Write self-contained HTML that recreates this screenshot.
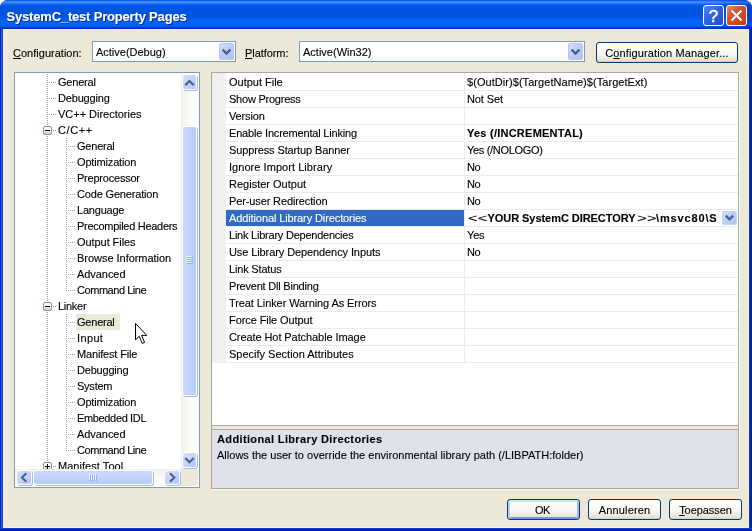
<!DOCTYPE html><html><head><meta charset="utf-8"><title>SystemC_test Property Pages</title><style>
html,body{margin:0;padding:0;background:#fff;}
body{width:752px;height:531px;overflow:hidden;position:relative;font-family:"Liberation Sans",sans-serif;font-size:11px;color:#000;}
*{box-sizing:border-box;}
.abs{position:absolute;}
#win{position:absolute;left:0;top:0;width:752px;height:531px;background:#0a3bd6;border-radius:8px 8px 0 0;overflow:hidden;}
#title{position:absolute;left:0;top:0;width:752px;height:29px;
 background:linear-gradient(to bottom,#0042d8 0,#2a7cf8 1px,#3a8eff 2.5px,#0a62ee 4.5px,#0055e0 6.5px,#0055e0 16px,#0058e6 18px,#0066fa 21px,#0066fa 25px,#0050e0 27px,#0030c0 28.5px,#0030c0 29px);}
#title .sh{position:absolute;right:0;top:0;width:40px;height:29px;background:linear-gradient(to right,rgba(0,20,160,0) 0,rgba(0,20,160,0.35) 100%);}
#title .t{position:absolute;left:6.5px;top:9px;font-family:"Liberation Sans",sans-serif;color:#fff;text-shadow:1px 1px 0 #0a2a8c;white-space:nowrap;line-height:15px;}
#client{position:absolute;left:3px;top:29px;width:746px;height:499px;background:#ece9d8;box-shadow:inset 0 0 0 1px #f7f2dc;}
#bl{position:absolute;left:0;top:29px;width:3px;height:502px;background:linear-gradient(to right,#0023c7 0,#0023c7 1px,#155cef 1px,#155cef 2px,#0b46dc 2px);}
#br{position:absolute;left:749px;top:29px;width:3px;height:502px;background:linear-gradient(to right,#0a40e0 0,#0a40e0 1px,#0026b4 1px,#0026b4 2px,#001a9c 2px);}
#bb{position:absolute;left:0;top:528px;width:752px;height:3px;background:linear-gradient(to bottom,#0a40e0 0,#0a40e0 1px,#0026b4 1px,#0026b4 2px,#001a9c 2px);}
.tb{position:absolute;top:5px;width:21px;height:21px;border:1px solid #fff;border-radius:3px;}
#help{left:703px;background:linear-gradient(135deg,#4f86f0 0,#2c63de 45%,#1f4fc8 100%);}
#close{left:726px;background:linear-gradient(135deg,#e98a6a 0,#d9502b 40%,#c63a14 100%);}
.combo{position:absolute;height:21px;background:#fff;border:1px solid #7f9db9;}
.combo .tx{position:absolute;left:3px;top:4px;white-space:nowrap;}
.dd{position:absolute;width:15px;height:17px;top:1px;right:1px;border-radius:2px;background:linear-gradient(135deg,#d2defc 0,#bccdf8 50%,#afc1f2 100%);border:1px solid #b4c6f5;}
.btn{position:absolute;height:21px;border:1px solid #003c74;border-radius:3px;background:linear-gradient(to bottom,#ffffff 0,#f7f6f0 60%,#e6e3d6 90%,#d6d0c5 100%);text-align:center;line-height:21px;white-space:nowrap;}
u{text-decoration:underline;}
.g{will-change:opacity;-webkit-text-stroke:0.12px currentColor;}
#tree{position:absolute;left:14px;top:72px;width:186px;height:416px;background:#fff;border:1px solid #7f9db9;overflow:hidden;}
.ti{position:absolute;height:16px;line-height:15px;white-space:nowrap;}
#grid{position:absolute;left:211px;top:72px;width:528px;height:417px;background:#ece9d8;border:1px solid #aca899;overflow:hidden;box-shadow:1px 1px 0 #fbfaf4;}
.gr{position:absolute;left:14px;width:512px;height:17px;border-bottom:1px solid #ebebeb;}
.gr .n{position:absolute;left:3px;top:1px;white-space:nowrap;line-height:14px;}
.gr .v{position:absolute;left:241px;top:1px;white-space:nowrap;line-height:14px;}
</style></head><body>
<div id="win">
<div id="title"><div class="sh"></div><div class="t"><span class="g" style="letter-spacing:-0.185px;font-weight:bold;font-size:13px;">SystemC_test Property Pages</span></div>
<div class="tb" id="help"><svg width="19" height="19" viewBox="0 0 19 19" style="position:absolute;left:0;top:0;will-change:opacity"><text x="9.5" y="15.8" text-anchor="middle" font-family="Liberation Sans,sans-serif" font-size="17" fill="#fff" stroke="#fff" stroke-width="0.5">?</text></svg></div>
<div class="tb" id="close"><svg width="19" height="19" viewBox="0 0 19 19" style="position:absolute;left:0;top:0"><path d="M4.5 4.5 L14.5 14.5 M14.5 4.5 L4.5 14.5" stroke="#fff" stroke-width="2.2" stroke-linecap="butt" fill="none"/></svg></div>
</div>
<div id="bl"></div><div id="br"></div><div id="bb"></div><div id="client"></div>
</div>
<div class="abs" style="left:13px;top:47px;white-space:nowrap"><span class="g" style="letter-spacing:0.014px;"><u>C</u>onfiguration:</span></div>
<div class="combo" style="left:92px;top:41px;width:144px"><div class="tx"><span class="g" style="letter-spacing:-0.008px;">Active(Debug)</span></div><div class="dd"><svg width="13" height="15" viewBox="0 0 13 15" style="position:absolute;left:0;top:0"><path d="M2.6 5.7 L6.5 9.6 L10.4 5.7" stroke="#4d6185" stroke-width="2.4" fill="none"/></svg></div></div>
<div class="abs" style="left:245px;top:47px;white-space:nowrap"><span class="g" style="letter-spacing:-0.068px;"><u>P</u>latform:</span></div>
<div class="combo" style="left:299px;top:41px;width:286px"><div class="tx"><span class="g" style="letter-spacing:0.002px;">Active(Win32)</span></div><div class="dd"><svg width="13" height="15" viewBox="0 0 13 15" style="position:absolute;left:0;top:0"><path d="M2.6 5.7 L6.5 9.6 L10.4 5.7" stroke="#4d6185" stroke-width="2.4" fill="none"/></svg></div></div>
<div class="btn" style="left:596px;top:42px;width:142px"><span class="g" style="letter-spacing:0.126px;">C<u>o</u>nfiguration Manager...</span></div>
<div id="tree">
<svg width="184" height="414" style="position:absolute;left:0;top:0" shape-rendering="crispEdges"><line x1="32.5" y1="1" x2="32.5" y2="397" stroke="#aaa593" stroke-width="1" stroke-dasharray="1,1"/><line x1="34" y1="9.5" x2="42" y2="9.5" stroke="#aaa593" stroke-width="1" stroke-dasharray="1,1"/><line x1="34" y1="25.5" x2="42" y2="25.5" stroke="#aaa593" stroke-width="1" stroke-dasharray="1,1"/><line x1="34" y1="41.5" x2="42" y2="41.5" stroke="#aaa593" stroke-width="1" stroke-dasharray="1,1"/><line x1="38" y1="57.5" x2="42" y2="57.5" stroke="#aaa593" stroke-width="1" stroke-dasharray="1,1"/><line x1="53" y1="73.5" x2="61" y2="73.5" stroke="#aaa593" stroke-width="1" stroke-dasharray="1,1"/><line x1="53" y1="89.5" x2="61" y2="89.5" stroke="#aaa593" stroke-width="1" stroke-dasharray="1,1"/><line x1="53" y1="105.5" x2="61" y2="105.5" stroke="#aaa593" stroke-width="1" stroke-dasharray="1,1"/><line x1="53" y1="121.5" x2="61" y2="121.5" stroke="#aaa593" stroke-width="1" stroke-dasharray="1,1"/><line x1="53" y1="137.5" x2="61" y2="137.5" stroke="#aaa593" stroke-width="1" stroke-dasharray="1,1"/><line x1="53" y1="153.5" x2="61" y2="153.5" stroke="#aaa593" stroke-width="1" stroke-dasharray="1,1"/><line x1="53" y1="169.5" x2="61" y2="169.5" stroke="#aaa593" stroke-width="1" stroke-dasharray="1,1"/><line x1="53" y1="185.5" x2="61" y2="185.5" stroke="#aaa593" stroke-width="1" stroke-dasharray="1,1"/><line x1="53" y1="201.5" x2="61" y2="201.5" stroke="#aaa593" stroke-width="1" stroke-dasharray="1,1"/><line x1="53" y1="217.5" x2="61" y2="217.5" stroke="#aaa593" stroke-width="1" stroke-dasharray="1,1"/><line x1="38" y1="233.5" x2="42" y2="233.5" stroke="#aaa593" stroke-width="1" stroke-dasharray="1,1"/><line x1="53" y1="249.5" x2="61" y2="249.5" stroke="#aaa593" stroke-width="1" stroke-dasharray="1,1"/><line x1="53" y1="265.5" x2="61" y2="265.5" stroke="#aaa593" stroke-width="1" stroke-dasharray="1,1"/><line x1="53" y1="281.5" x2="61" y2="281.5" stroke="#aaa593" stroke-width="1" stroke-dasharray="1,1"/><line x1="53" y1="297.5" x2="61" y2="297.5" stroke="#aaa593" stroke-width="1" stroke-dasharray="1,1"/><line x1="53" y1="313.5" x2="61" y2="313.5" stroke="#aaa593" stroke-width="1" stroke-dasharray="1,1"/><line x1="53" y1="329.5" x2="61" y2="329.5" stroke="#aaa593" stroke-width="1" stroke-dasharray="1,1"/><line x1="53" y1="345.5" x2="61" y2="345.5" stroke="#aaa593" stroke-width="1" stroke-dasharray="1,1"/><line x1="53" y1="361.5" x2="61" y2="361.5" stroke="#aaa593" stroke-width="1" stroke-dasharray="1,1"/><line x1="53" y1="377.5" x2="61" y2="377.5" stroke="#aaa593" stroke-width="1" stroke-dasharray="1,1"/><line x1="38" y1="393.5" x2="42" y2="393.5" stroke="#aaa593" stroke-width="1" stroke-dasharray="1,1"/><line x1="51.5" y1="65" x2="51.5" y2="218" stroke="#aaa593" stroke-width="1" stroke-dasharray="1,1"/><line x1="51.5" y1="241" x2="51.5" y2="378" stroke="#aaa593" stroke-width="1" stroke-dasharray="1,1"/></svg>
<div class="ti" style="left:43px;top:2px"><span class="g" style="letter-spacing:-0.206px;">General</span></div>
<div class="ti" style="left:43px;top:18px"><span class="g" style="letter-spacing:-0.180px;">Debugging</span></div>
<div class="ti" style="left:43px;top:34px"><span class="g" style="letter-spacing:-0.017px;">VC++ Directories</span></div>
<div class="abs" style="left:28px;top:53px;width:9px;height:9px;border:1px solid #7898b5;border-radius:2px;background:linear-gradient(to bottom,#fff 0,#fcfbf8 35%,#d3cdb9 100%)"><div class="abs" style="left:1px;top:3px;width:5px;height:1px;background:#000"></div></div>
<div class="ti" style="left:43px;top:50px"><span class="g" style="letter-spacing:0.581px;">C/C++</span></div>
<div class="ti" style="left:62px;top:66px"><span class="g" style="letter-spacing:-0.220px;">General</span></div>
<div class="ti" style="left:62px;top:82px"><span class="g" style="letter-spacing:-0.162px;">Optimization</span></div>
<div class="ti" style="left:62px;top:98px"><span class="g" style="letter-spacing:-0.218px;">Preprocessor</span></div>
<div class="ti" style="left:62px;top:114px"><span class="g" style="letter-spacing:-0.172px;">Code Generation</span></div>
<div class="ti" style="left:62px;top:130px"><span class="g" style="letter-spacing:-0.207px;">Language</span></div>
<div class="ti" style="left:62px;top:146px"><span class="g" style="letter-spacing:-0.288px;">Precompiled Headers</span></div>
<div class="ti" style="left:62px;top:162px"><span class="g" style="letter-spacing:-0.068px;">Output Files</span></div>
<div class="ti" style="left:62px;top:178px"><span class="g" style="letter-spacing:-0.031px;">Browse Information</span></div>
<div class="ti" style="left:62px;top:194px"><span class="g" style="letter-spacing:-0.055px;">Advanced</span></div>
<div class="ti" style="left:62px;top:210px"><span class="g" style="letter-spacing:-0.449px;">Command Line</span></div>
<div class="abs" style="left:28px;top:229px;width:9px;height:9px;border:1px solid #7898b5;border-radius:2px;background:linear-gradient(to bottom,#fff 0,#fcfbf8 35%,#d3cdb9 100%)"><div class="abs" style="left:1px;top:3px;width:5px;height:1px;background:#000"></div></div>
<div class="ti" style="left:43px;top:226px"><span class="g" style="letter-spacing:-0.278px;">Linker</span></div>
<div class="abs" style="left:61px;top:241px;width:44px;height:16px;background:#ece9d8"></div>
<div class="ti" style="left:62px;top:242px"><span class="g" style="letter-spacing:-0.220px;">General</span></div>
<div class="ti" style="left:62px;top:258px"><span class="g" style="letter-spacing:0.366px;">Input</span></div>
<div class="ti" style="left:62px;top:274px"><span class="g" style="letter-spacing:-0.166px;">Manifest File</span></div>
<div class="ti" style="left:62px;top:290px"><span class="g" style="letter-spacing:-0.202px;">Debugging</span></div>
<div class="ti" style="left:62px;top:306px"><span class="g" style="letter-spacing:-0.231px;">System</span></div>
<div class="ti" style="left:62px;top:322px"><span class="g" style="letter-spacing:-0.162px;">Optimization</span></div>
<div class="ti" style="left:62px;top:338px"><span class="g" style="letter-spacing:-0.349px;">Embedded IDL</span></div>
<div class="ti" style="left:62px;top:354px"><span class="g" style="letter-spacing:-0.055px;">Advanced</span></div>
<div class="ti" style="left:62px;top:370px"><span class="g" style="letter-spacing:-0.449px;">Command Line</span></div>
<div class="abs" style="left:28px;top:389px;width:9px;height:9px;border:1px solid #7898b5;border-radius:2px;background:linear-gradient(to bottom,#fff 0,#fcfbf8 35%,#d3cdb9 100%)"><div class="abs" style="left:1px;top:3px;width:5px;height:1px;background:#000"></div><div class="abs" style="left:3px;top:1px;width:1px;height:5px;background:#000"></div></div>
<div class="ti" style="left:43px;top:386px"><span class="g" style="letter-spacing:0.045px;">Manifest Tool</span></div>
<div class="abs" style="left:166px;top:1px;width:17px;height:395px;background:linear-gradient(to right,#efeee6 0,#f8f7f2 30%,#fdfdfb 60%,#fefefc 100%)"></div>
<div class="abs" style="left:167px;top:1px;width:15px;height:16px;border:1px solid #fff;border-radius:3px;background:linear-gradient(135deg,#d6e1fe 0,#c3d3fc 50%,#b3c6f6 100%);box-shadow:1px 1px 0 #a9bcdf;"><svg width="15" height="16" viewBox="0 0 15 16" style="position:absolute;left:-1px;top:-1px"><path d="M3.2 11.3 L7.5 7 L11.8 11.3" stroke="#4d6185" stroke-width="2.1" fill="none"/></svg></div>
<div class="abs" style="left:167px;top:53px;width:15px;height:270px;border:1px solid #fff;border-radius:3px;background:linear-gradient(to right,#cbd9fe 0,#c3d3fd 50%,#b7c9f8 100%);box-shadow:1px 1px 0 #a9bcdf;"><div class="abs" style="left:3px;top:129px;width:6px;height:8px;background:repeating-linear-gradient(to bottom,#eef4fe 0,#eef4fe 1px,rgba(0,0,0,0) 1px,rgba(0,0,0,0) 2px)"></div><div class="abs" style="left:4px;top:130px;width:6px;height:8px;background:repeating-linear-gradient(to bottom,#8cb0f8 0,#8cb0f8 1px,rgba(0,0,0,0) 1px,rgba(0,0,0,0) 2px)"></div></div>
<div class="abs" style="left:167px;top:379px;width:15px;height:16px;border:1px solid #fff;border-radius:3px;background:linear-gradient(135deg,#d6e1fe 0,#c3d3fc 50%,#b3c6f6 100%);box-shadow:1px 1px 0 #a9bcdf;"><svg width="15" height="16" viewBox="0 0 15 16" style="position:absolute;left:-1px;top:-1px"><path d="M3.2 6 L7.5 10.3 L11.8 6" stroke="#4d6185" stroke-width="2.1" fill="none"/></svg></div>
<div class="abs" style="left:0;top:396px;width:166px;height:17px;background:linear-gradient(to bottom,#efeee6 0,#f8f7f2 30%,#fdfdfb 60%,#fefefc 100%)"></div>
<div class="abs" style="left:1px;top:397px;width:16px;height:15px;border:1px solid #fff;border-radius:3px;background:linear-gradient(135deg,#d6e1fe 0,#c3d3fc 50%,#b3c6f6 100%);box-shadow:1px 1px 0 #a9bcdf;"><svg width="16" height="15" viewBox="0 0 16 15" style="position:absolute;left:-1px;top:-1px"><path d="M10.3 3.2 L6 7.5 L10.3 11.8" stroke="#4d6185" stroke-width="2.1" fill="none"/></svg></div>
<div class="abs" style="left:18px;top:397px;width:120px;height:15px;border:1px solid #fff;border-radius:3px;background:linear-gradient(to bottom,#cbd9fe 0,#c3d3fd 50%,#b7c9f8 100%);box-shadow:1px 1px 0 #a9bcdf;"><div class="abs" style="left:55px;top:3px;width:8px;height:6px;background:repeating-linear-gradient(to right,#eef4fe 0,#eef4fe 1px,rgba(0,0,0,0) 1px,rgba(0,0,0,0) 2px)"></div><div class="abs" style="left:56px;top:4px;width:8px;height:6px;background:repeating-linear-gradient(to right,#8cb0f8 0,#8cb0f8 1px,rgba(0,0,0,0) 1px,rgba(0,0,0,0) 2px)"></div></div>
<div class="abs" style="left:149px;top:397px;width:16px;height:15px;border:1px solid #fff;border-radius:3px;background:linear-gradient(135deg,#d6e1fe 0,#c3d3fc 50%,#b3c6f6 100%);box-shadow:1px 1px 0 #a9bcdf;"><svg width="16" height="15" viewBox="0 0 16 15" style="position:absolute;left:-1px;top:-1px"><path d="M6 3.2 L10.3 7.5 L6 11.8" stroke="#4d6185" stroke-width="2.1" fill="none"/></svg></div>
<div class="abs" style="left:166px;top:396px;width:17px;height:17px;background:#ece9d8"></div>
</div>
<div id="grid">
<div class="abs" style="left:0;top:0;width:526px;height:353px;background:#fff;border-bottom:1px solid #aca899"></div>
<div class="abs" style="left:0;top:0;width:14px;height:290px;background:#f0f0f0"></div>
<div class="abs" style="left:252px;top:0;width:1px;height:290px;background:#ebebeb"></div>
<div class="gr" style="top:1px"><div class="n"><span class="g" style="letter-spacing:-0.010px;">Output File</span></div><div class="v"><span class="g" style="letter-spacing:0.056px;">$(OutDir)$(TargetName)$(TargetExt)</span></div></div>
<div class="gr" style="top:18px"><div class="n"><span class="g" style="letter-spacing:-0.230px;">Show Progress</span></div><div class="v"><span class="g" style="letter-spacing:-0.098px;">Not Set</span></div></div>
<div class="gr" style="top:35px"><div class="n"><span class="g" style="letter-spacing:-0.143px;">Version</span></div><div class="v"></div></div>
<div class="gr" style="top:52px"><div class="n"><span class="g" style="letter-spacing:-0.185px;">Enable Incremental Linking</span></div><div class="v"><span class="g" style="letter-spacing:0.242px;font-weight:bold;">Yes (/INCREMENTAL)</span></div></div>
<div class="gr" style="top:69px"><div class="n"><span class="g" style="letter-spacing:-0.123px;">Suppress Startup Banner</span></div><div class="v"><span class="g" style="letter-spacing:-0.321px;">Yes (/NOLOGO)</span></div></div>
<div class="gr" style="top:86px"><div class="n"><span class="g" style="letter-spacing:0.052px;">Ignore Import Library</span></div><div class="v"><span class="g" style="letter-spacing:-0.381px;">No</span></div></div>
<div class="gr" style="top:103px"><div class="n"><span class="g" style="letter-spacing:0.004px;">Register Output</span></div><div class="v"><span class="g" style="letter-spacing:-0.381px;">No</span></div></div>
<div class="gr" style="top:120px"><div class="n"><span class="g" style="letter-spacing:-0.124px;">Per-user Redirection</span></div><div class="v"><span class="g" style="letter-spacing:-0.381px;">No</span></div></div>
<div class="gr" style="top:137px"><div class="abs" style="left:0;top:0;width:238px;height:16px;background:#316ac5"></div><div class="n" style="color:#fff"><span class="g" style="letter-spacing:-0.107px;">Additional Library Directories</span></div><div class="v"><span class="abs" style="left:0.6px;top:0;transform:scaleX(1.5);transform-origin:0 50%;display:inline-block">&lt;&lt;</span><span class="abs" style="left:20.5px;top:0"><span class="g" style="letter-spacing:-0.053px;font-weight:bold;">YOUR SystemC DIRECTORY</span></span><span class="abs" style="left:169.6px;top:0;transform:scaleX(1.5);transform-origin:0 50%;display:inline-block">&gt;&gt;</span><span class="abs" style="left:189.1px;top:0"><span class="g" style="letter-spacing:0.841px;font-weight:bold;">\msvc80\S</span></span></div>
<div class="abs" style="left:496px;top:1px;width:15px;height:14px;border-radius:2px;background:linear-gradient(135deg,#d2defc 0,#bccdf8 50%,#afc1f2 100%);border:1px solid #c4d3f8"><svg width="13" height="12" viewBox="0 0 13 12" style="position:absolute;left:0;top:0"><path d="M2.8 3.6 L6.5 7.3 L10.2 3.6" stroke="#4d6185" stroke-width="2.4" fill="none"/></svg></div></div>
<div class="gr" style="top:154px"><div class="n"><span class="g" style="letter-spacing:-0.230px;">Link Library Dependencies</span></div><div class="v"><span class="g" style="letter-spacing:-0.184px;">Yes</span></div></div>
<div class="gr" style="top:171px"><div class="n"><span class="g" style="letter-spacing:-0.096px;">Use Library Dependency Inputs</span></div><div class="v"><span class="g" style="letter-spacing:-0.381px;">No</span></div></div>
<div class="gr" style="top:188px"><div class="n"><span class="g" style="letter-spacing:-0.175px;">Link Status</span></div><div class="v"></div></div>
<div class="gr" style="top:205px"><div class="n"><span class="g" style="letter-spacing:-0.209px;">Prevent Dll Binding</span></div><div class="v"></div></div>
<div class="gr" style="top:222px"><div class="n"><span class="g" style="letter-spacing:-0.090px;">Treat Linker Warning As Errors</span></div><div class="v"></div></div>
<div class="gr" style="top:239px"><div class="n"><span class="g" style="letter-spacing:-0.081px;">Force File Output</span></div><div class="v"></div></div>
<div class="gr" style="top:256px"><div class="n"><span class="g" style="letter-spacing:-0.081px;">Create Hot Patchable Image</span></div><div class="v"></div></div>
<div class="gr" style="top:273px"><div class="n"><span class="g" style="letter-spacing:-0.001px;">Specify Section Attributes</span></div><div class="v"></div></div>
<div class="abs" style="left:0;top:356px;width:526px;height:59px;background:#dfe2eb;border-top:1px solid #aca899"></div>
<div class="abs" style="left:5px;top:360px;white-space:nowrap"><span class="g" style="letter-spacing:0.361px;font-weight:bold;">Additional Library Directories</span></div>
<div class="abs" style="left:5px;top:376px;white-space:nowrap"><span class="g" style="letter-spacing:0.009px;">Allows the user to override the environmental library path (/LIBPATH:folder)</span></div>
</div>
<div class="btn" style="left:507px;top:499px;width:73px;padding-right:2px;box-shadow:inset 0 2px 0 #cde4fd,inset 2px 0 0 #b5d0f8,inset -2px 0 0 #9fb8f0,inset 0 -2px 0 #7b94e6"><span class="g" style="letter-spacing:-0.453px;">OK</span></div>
<div class="btn" style="left:588px;top:499px;width:73px"><span class="g" style="letter-spacing:0.149px;">Annuleren</span></div>
<div class="btn" style="left:669px;top:499px;width:73px"><span class="g" style="letter-spacing:-0.058px;"><u>T</u>oepassen</span></div>
<svg class="abs" style="left:135px;top:323px" width="13" height="21" viewBox="0 0 13 21"><path d="M0.5 0.5 L0.5 16.8 L4.2 13.3 L7.2 20.4 L9.6 19.4 L6.6 12.4 L11.8 12.4 Z" fill="#fff" stroke="#000" stroke-width="1"/></svg>
</body></html>
